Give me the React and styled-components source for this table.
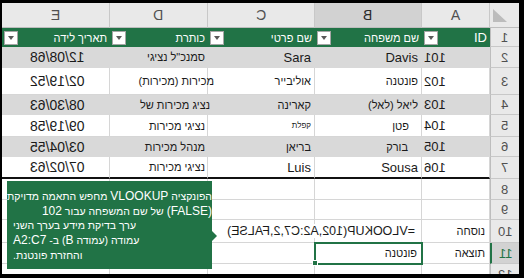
import React from 'react';
import styled, { createGlobalStyle } from 'styled-components';

const GREEN = '#217346';
const FONT = '"Liberation Sans", Arial, "DejaVu Sans", sans-serif';

const Global = createGlobalStyle`
  *, *::before, *::after { box-sizing: border-box; }
  html, body { margin: 0; padding: 0; background: #000; }
  body { font-family: ${FONT}; }
`;

const Frame = styled.div`
  width: 524px;
  height: 278px;
  padding: 3px 5px 4px 2px;
  background: #000;
`;

const Sheet = styled.div`
  position: relative;
  height: 100%;
  display: grid;
  grid-template-columns: 108px 98px 107px 107px 68px 29px;
  grid-template-rows: 25px 19px 21px 27px 20px 22px 20px 22px 21px 20px 23px 21px 21px;
  background: #fff;
  overflow: hidden;
  font-family: ${FONT};
`;

const Mirror = styled.span`
  display: inline-block;
  transform: scaleX(-1);
  font-size: ${p => (p.$size ? `${p.$size}px` : 'inherit')};
`;

const ColHead = styled.div`
  display: flex;
  align-items: center;
  justify-content: center;
  background: ${p => (p.$selected ? '#d2d2d2' : '#e9e9e9')};
  border-right: 1px solid #c8c8c8;
  border-bottom: 1px solid #bdbdbd;
  color: ${p => (p.$selected ? '#2b2b2b' : '#505050')};
  font-size: 14px;
`;

const Corner = styled.div`
  display: flex;
  align-items: flex-end;
  padding: 0 0 5px 3px;
  background: #e9e9e9;
  border-bottom: 1px solid #bdbdbd;
`;

const HeadCell = styled.div`
  display: flex;
  align-items: center;
  justify-content: space-between;
  padding: 0 3px 0 2px;
  background: ${GREEN};
  color: #fff;
  font-size: 13px;
  white-space: nowrap;
`;

const Drop = styled.span`
  width: 14px;
  height: 14px;
  flex: none;
  display: flex;
  align-items: center;
  justify-content: center;
  background: #fff;
  border: 1px solid #a6a6a6;
  &::after {
    content: '';
    border-left: 3.5px solid transparent;
    border-right: 3.5px solid transparent;
    border-top: 4px solid #595959;
  }
`;

const Cell = styled.div`
  position: relative;
  display: flex;
  align-items: center;
  justify-content: ${p => (p.$start ? 'flex-start' : 'flex-end')};
  padding: 0 ${p => (p.$pr ?? 3)}px 0 ${p => (p.$pl ?? 2)}px;
  background: ${p => (p.$band ? '#d9d9d9' : '#fff')};
  border-right: 1px solid ${p => (p.$band ? '#d9d9d9' : '#d6d6d6')};
  border-bottom: ${p =>
    p.$thick ? '2px solid #111' : `1px solid ${p.$band ? '#d9d9d9' : '#d6d6d6'}`};
  outline: ${p => (p.$active ? `2px solid ${GREEN}` : 'none')};
  outline-offset: -1px;
  z-index: ${p => (p.$active ? 2 : 'auto')};
  font-size: 13px;
  color: #1a1a1a;
  white-space: nowrap;
  min-width: 0;
`;

/* Hebrew / Latin text run inside a cell; may spill into the neighbour cell */
const Text = styled.span`
  position: relative;
  z-index: 1;
  direction: rtl;
  unicode-bidi: isolate;
  font-size: ${p => p.$size || 13}px;
  margin-right: ${p => p.$mr || 0}px;
`;

const Formula = styled.span`
  position: relative;
  z-index: 1;
  display: inline-block;
  transform: scaleX(-1);
  background: #fff;
  padding-left: 2px;
  font-size: 12.5px;
`;

const Handle = styled.span`
  position: absolute;
  left: -3px;
  bottom: -3px;
  width: 6px;
  height: 6px;
  background: ${GREEN};
  border: 1px solid #fff;
`;

const RowHead = styled.div`
  display: flex;
  align-items: center;
  justify-content: center;
  background: ${p => (p.$selected ? '#d2d2d2' : '#e9e9e9')};
  border-bottom: 1px solid #c8c8c8;
  border-left: ${p => (p.$selected ? `2px solid ${GREEN}` : '1px solid #bdbdbd')};
  color: ${p => (p.$selected ? GREEN : '#505050')};
  font-size: 13px;
`;

const Tip = styled.div`
  position: absolute;
  left: 5px;
  top: 178px;
  width: 205px;
  height: 88px;
  padding: 8px 0 8px 6px;
  background: ${GREEN};
  color: #fff;
  font-size: 10.5px;
  line-height: 14.7px;
  z-index: 5;
  &::after {
    content: '';
    position: absolute;
    right: -5px;
    top: 50px;
    border-top: 5px solid transparent;
    border-bottom: 5px solid transparent;
    border-left: 5px solid ${GREEN};
  }
`;

const TipLine = styled.div`
  direction: rtl;
  text-align: left;
  white-space: nowrap;
  padding-left: ${p => p.$indent || 0}px;
`;

const Lat = styled.span`
  font-size: 12px;
`;

const columns = [
  { key: 'E', title: 'תאריך לידה' },
  { key: 'D', title: 'כותרת' },
  { key: 'C', title: 'שם פרטי' },
  { key: 'B', title: 'שם משפחה', selected: true },
  { key: 'A', title: 'ID', latin: true },
];

const HEB = 11;

const data = [
  { n: 2, band: true, e: '12/08/68', d: 'סמנכ"ל נציגי', c: 'Sara', cl: true, b: 'Davis', bl: true, a: '101' },
  { n: 3, band: false, e: '02/19/52', d: 'מכירות (מכירות)', dmr: -9, c: 'אוליבייר', b: 'פונטנה', a: '102' },
  { n: 4, band: true, e: '08/30/63', d: 'נציג מכירות של', dmr: -5, c: 'קארינה', b: 'ליאל (לאל)', a: '103' },
  { n: 5, band: false, e: '09/19/58', d: 'נציגי מכירות', c: 'קפלת', cs: 8, b: 'פטן', bpr: 12, a: '104' },
  { n: 6, band: true, e: '03/04/55', d: 'מנהל מכירות', c: 'בריאן', b: 'בורק', bpr: 13, a: '105' },
  { n: 7, band: false, e: '07/02/63', d: 'נציגי מכירות', c: 'Luis', cl: true, b: 'Sousa', bl: true, a: '106', thick: true },
];

const tipLines = [
  { parts: ['הפונקציה ', ['VLOOKUP'], ' מחפש התאמה מדויקת'] },
  { parts: [['(FALSE)'], ' של שם המשפחה עבור ', ['102']], indent: 35 },
  { parts: ['ערך בדיקת מידע בערך השני'] },
  { parts: ['עמודה (עמודה ', ['B'], ') ב- ', ['A2:C7']] },
  { parts: ['והחזרת פונטנת.'] },
];

function Triangle() {
  return (
    <svg width="14" height="13" viewBox="0 0 14 13">
      <polygon points="0,0 0,13 14,13" fill="#bcbcbc" />
    </svg>
  );
}

export default function App() {
  return (
    <Frame>
      <Global />
      <Sheet>
        {columns.map(c => (
          <ColHead key={c.key} $selected={c.selected}>
            <Mirror>{c.key}</Mirror>
          </ColHead>
        ))}
        <Corner>
          <Triangle />
        </Corner>

        {columns.map(c => (
          <HeadCell key={c.key}>
            <Drop />
            <Text $size={c.latin ? 13 : HEB}>{c.title}</Text>
          </HeadCell>
        ))}
        <RowHead>
          <Mirror>1</Mirror>
        </RowHead>

        {data.map(r => (
          <React.Fragment key={r.n}>
            <Cell $band={r.band} $thick={r.thick} $start $pl={28}>
              <Mirror $size={14}>{r.e}</Mirror>
            </Cell>
            <Cell $band={r.band} $thick={r.thick} $pr={2}>
              <Text $size={HEB} $mr={r.dmr}>
                {r.d}
              </Text>
            </Cell>
            <Cell $band={r.band} $thick={r.thick}>
              <Text $size={r.cs || (r.cl ? 13 : HEB)}>{r.c}</Text>
            </Cell>
            <Cell $band={r.band} $thick={r.thick} $pr={r.bpr}>
              <Text $size={r.bl ? 13 : HEB}>{r.b}</Text>
            </Cell>
            <Cell $band={r.band} $thick={r.thick} $start>
              <Mirror>{r.a}</Mirror>
            </Cell>
            <RowHead>
              <Mirror>{r.n}</Mirror>
            </RowHead>
          </React.Fragment>
        ))}

        {[8, 9].map(n => (
          <React.Fragment key={n}>
            <Cell />
            <Cell />
            <Cell />
            <Cell />
            <Cell />
            <RowHead>
              <Mirror>{n}</Mirror>
            </RowHead>
          </React.Fragment>
        ))}

        <Cell />
        <Cell />
        <Cell />
        <Cell $pr={4}>
          <Formula>=VLOOKUP(102,A2:C7,2,FALSE)</Formula>
        </Cell>
        <Cell $pr={4}>
          <Text $size={HEB}>נוסחה</Text>
        </Cell>
        <RowHead>
          <Mirror>10</Mirror>
        </RowHead>

        <Cell />
        <Cell />
        <Cell />
        <Cell $active $pr={4}>
          <Text $size={HEB}>פונטנה</Text>
          <Handle />
        </Cell>
        <Cell $pr={4}>
          <Text $size={HEB}>תוצאה</Text>
        </Cell>
        <RowHead $selected>
          <Mirror>11</Mirror>
        </RowHead>

        <Cell />
        <Cell />
        <Cell />
        <Cell />
        <Cell />
        <RowHead>
          <Mirror>12</Mirror>
        </RowHead>

        <Tip>
          {tipLines.map((l, i) => (
            <TipLine key={i} $indent={l.indent}>
              {l.parts.map((p, j) =>
                Array.isArray(p) ? <Lat key={j}>{p[0]}</Lat> : <React.Fragment key={j}>{p}</React.Fragment>
              )}
            </TipLine>
          ))}
        </Tip>
      </Sheet>
    </Frame>
  );
}
